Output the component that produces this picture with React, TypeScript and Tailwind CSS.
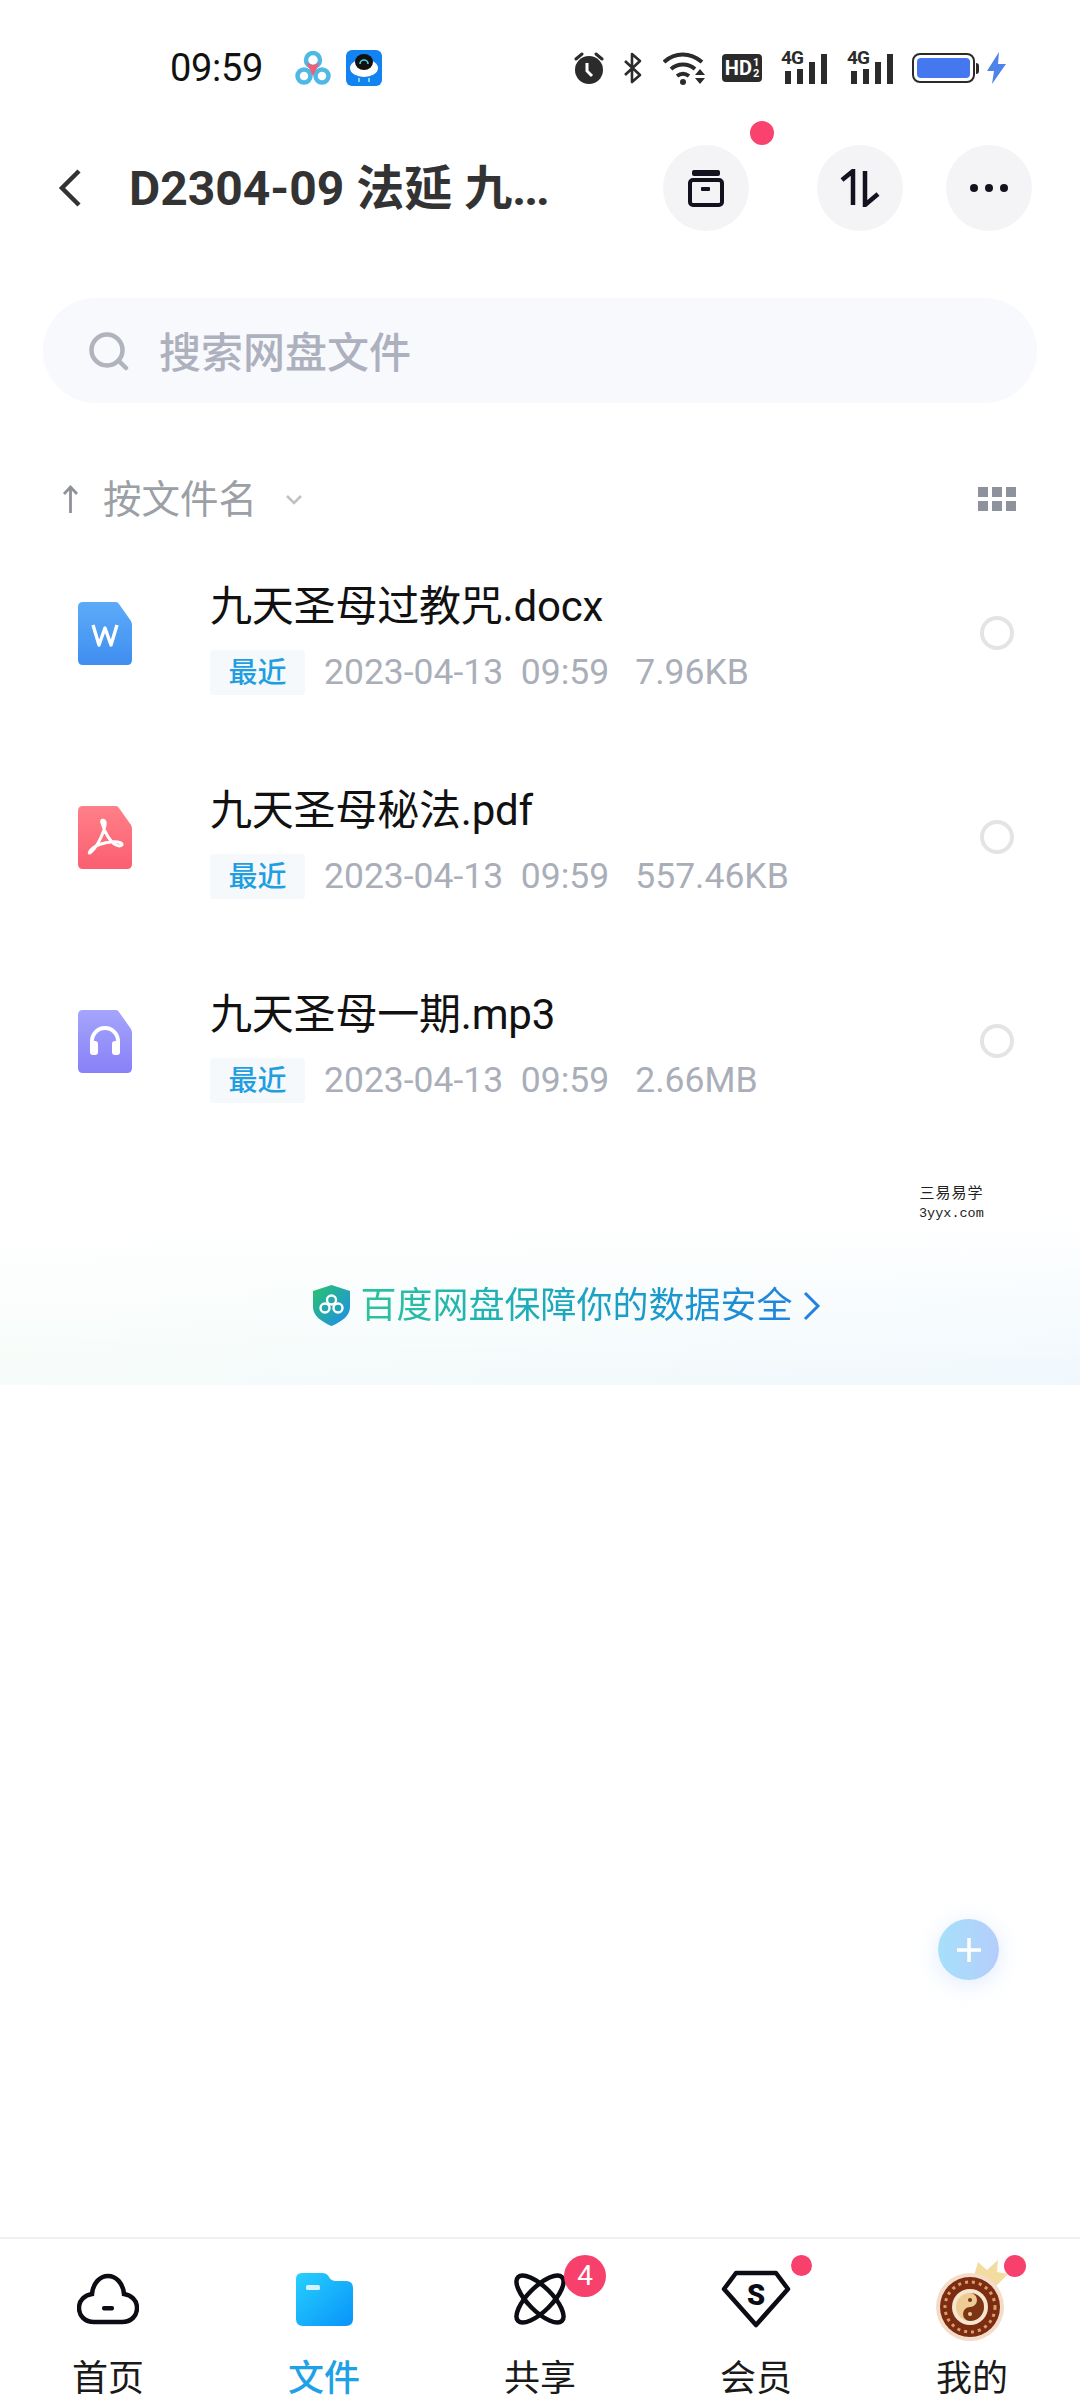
const CJK = "font-['Roboto','Noto_Sans_CJK_SC',sans-serif]";

const files = [
  { name: '九天圣母过教咒.docx', size: '7.96KB', kind: 'word' },
  { name: '九天圣母秘法.pdf', size: '557.46KB', kind: 'pdf' },
  { name: '九天圣母一期.mp3', size: '2.66MB', kind: 'audio' },
];

function Alarm() {
  return (
    <svg width="30" height="32" viewBox="0 0 30 32" className="mr-[19px]">
      <path d="M2 7 8 2M28 7l-6-5" stroke="#2b2b2b" strokeWidth="3" strokeLinecap="round" />
      <circle cx="15" cy="18" r="14" fill="#2b2b2b" />
      <path d="M13 11v8l5 5" stroke="#fff" strokeWidth="3" fill="none" />
    </svg>
  );
}

function Bluetooth() {
  return (
    <svg width="20" height="32" viewBox="0 0 20 32" className="mr-[20px]">
      <path d="M2 9 17 23 9 30V2l8 7L2 23" stroke="#2b2b2b" strokeWidth="2.6" fill="none" strokeLinejoin="round" />
    </svg>
  );
}

function Wifi() {
  return (
    <svg width="44" height="33" viewBox="0 0 44 33" className="mr-[15px]">
      <path d="M1 10C12 0 27 0 39 10" stroke="#2b2b2b" strokeWidth="4" fill="none" />
      <path d="M8 17c7-6 17-6 24 0" stroke="#2b2b2b" strokeWidth="4" fill="none" />
      <path d="M14 24c4-3 8-3 12 0" stroke="#2b2b2b" strokeWidth="4" fill="none" />
      <circle cx="20" cy="30" r="3" fill="#2b2b2b" />
      <path d="M37 17l5 6H32zM32 26h10l-5 6z" fill="#2b2b2b" />
    </svg>
  );
}

function Hd() {
  return (
    <div className="mr-[19px] flex h-[28px] w-[40px] items-center justify-center rounded-[4px] bg-[#2b2b2b] font-['Roboto',sans-serif] text-white">
      <span className="text-[20px] leading-none font-bold">HD</span>
      <span className="ml-[1px] flex flex-col text-[11px] leading-[11px] font-bold">
        <span>1</span>
        <span>2</span>
      </span>
    </div>
  );
}

function Signal() {
  return (
    <div className="relative h-[32px] w-[46px]">
      <span className="absolute top-[-4px] left-0 font-['Roboto',sans-serif] text-[19px] leading-[20px] font-bold tracking-[-0.8px] text-[#2b2b2b]">4G</span>
      <span className="absolute bottom-0 left-[4px] h-[13px] w-[6px] bg-[#2b2b2b]" />
      <span className="absolute bottom-0 left-[16px] h-[15px] w-[6px] bg-[#2b2b2b]" />
      <span className="absolute bottom-0 left-[28px] h-[22px] w-[6px] bg-[#2b2b2b]" />
      <span className="absolute bottom-0 left-[40px] h-[30px] w-[6px] bg-[#2b2b2b]" />
    </div>
  );
}

function Battery() {
  return (
    <div className="ml-[19px] flex items-center">
      <div className="flex h-[30px] w-[63px] items-center rounded-[8px] border-2 border-[#2b2b2b] p-[3px]">
        <div className="h-full w-full rounded-[4px] bg-[#4578ee]" />
      </div>
      <div className="ml-[1px] h-[11px] w-[3px] rounded-r-sm bg-[#2b2b2b]" />
    </div>
  );
}

function FileIcon({ kind }: { kind: string }) {
  const colors: Record<string, [string, string]> = {
    word: ['#5cabf9', '#3f8ef0'],
    pdf: ['#ff8088', '#fb5e70'],
    audio: ['#a5a5fb', '#8880f8'],
  };
  const [c1, c2] = colors[kind];
  return (
    <svg width="54" height="63" viewBox="0 0 54 63">
      <defs>
        <linearGradient id={`file-${kind}`} x1="0" y1="0" x2="0" y2="1">
          <stop offset="0" stopColor={c1} />
          <stop offset="1" stopColor={c2} />
        </linearGradient>
      </defs>
      <path d="M5 0H38Q40 0 41 2L53 19Q54 21 54 23V58Q54 63 49 63H5Q0 63 0 58V5Q0 0 5 0Z" fill={`url(#file-${kind})`} />
      {kind === 'word' && <path d="M15 23 21 43 27 26 33 43 39 23" stroke="#fff" strokeWidth="3.4" fill="none" strokeLinejoin="round" />}
      {kind === 'pdf' && <path d="M24 17C22 13 28 13 27 19 26 26 20 40 13 46 10 49 11 45 15 42 22 37 36 34 43 37 46 39 42 41 38 39 32 36 26 25 24 17Z" stroke="#fff" strokeWidth="3" fill="none" strokeLinejoin="round" />}
      {kind === 'audio' && (
        <g>
          <path d="M14 40V31a13 13 0 0 1 26 0v9" stroke="#fff" strokeWidth="4" fill="none" />
          <rect x="12" y="31" width="8" height="14" rx="3" fill="#fff" />
          <rect x="34" y="31" width="8" height="14" rx="3" fill="#fff" />
        </g>
      )}
    </svg>
  );
}

function FileRow({ name, size, kind }: { name: string; size: string; kind: string }) {
  return (
    <div className="flex h-[204px] items-center pr-[66px] pl-[78px]">
      <FileIcon kind={kind} />
      <div className="ml-[78px] flex flex-col pt-[10px]">
        <div className="text-[42px] leading-[50px] tracking-[-0.2px] text-[#111]">{name}</div>
        <div className="mt-[18px] flex items-center">
          <span className="flex h-[45px] w-[95px] items-center justify-center rounded-[3px] bg-[#f6f9fb] pt-[3px] text-[29px] font-medium text-[#1f9fe0]">最近</span>
          <span className="ml-[19px] text-[35.5px] leading-[45px] whitespace-pre text-[#a9aeb9]">2023-04-13  09:59</span>
          <span className="ml-[26px] text-[35.5px] leading-[45px] text-[#a9aeb9]">{size}</span>
        </div>
      </div>
      <div className="ml-auto h-[34px] w-[34px] rounded-full border-[4px] border-[#e3e4e6]" />
    </div>
  );
}

function NavItem({ label, active, children }: { label: string; active?: boolean; children: React.ReactNode }) {
  return (
    <div className="flex w-[216px] flex-col items-center">
      <div className="relative flex h-[72px] w-[80px] items-center justify-center">{children}</div>
      <div className={`mt-[24px] text-[36px] leading-[40px] ${active ? 'font-medium text-[#1ea1e6]' : 'text-[#1a1a1a]'}`}>{label}</div>
    </div>
  );
}

export default function App() {
  return (
    <div className={`relative flex h-[2400px] w-[1080px] flex-col overflow-hidden bg-white ${CJK}`}>
      {/* status bar */}
      <div className="flex h-[136px] items-center pr-[74px] pl-[170px]">
        <span className="w-[94px] text-[38px] tracking-[-0.3px] text-[#111]">09:59</span>
        <svg width="36" height="35" viewBox="0 0 36 35" className="ml-[31px]">
          <circle cx="9" cy="25" r="6.5" fill="none" stroke="#4fb9e6" strokeWidth="4.5" />
          <circle cx="27" cy="25" r="6.5" fill="none" stroke="#4fb9e6" strokeWidth="4.5" />
          <circle cx="18" cy="9" r="7" fill="none" stroke="#4fb9e6" strokeWidth="4.5" />
          <path d="M11 11 18 25 25 11Q18 17 11 11Z" fill="#ee5f78" />
        </svg>
        <svg width="36" height="36" viewBox="0 0 36 36" className="ml-[15px]">
          <rect width="36" height="36" rx="6" fill="#1283f0" />
          <ellipse cx="18" cy="18" rx="14" ry="9" fill="#fff" />
          <ellipse cx="18" cy="12" rx="9" ry="8" fill="#111" />
          <path d="M14 14a4 4 0 0 1 8 0" stroke="#4fd0d8" strokeWidth="1.6" fill="none" />
          <path d="M13 28v4M23 28v4" stroke="#7fd4f5" strokeWidth="2" />
        </svg>
        <div className="ml-auto flex items-center">
          <Alarm />
          <Bluetooth />
          <Wifi />
          <Hd />
          <Signal />
          <div className="ml-[20px]">
            <Signal />
          </div>
          <Battery />
          <svg width="19" height="32" viewBox="0 0 19 32" className="ml-[8px]">
            <path d="M12 0 0 19h7L5 32 19 12h-8z" fill="#4f82ea" />
          </svg>
        </div>
      </div>

      {/* header */}
      <div className="flex h-[104px] items-center pr-[48px] pl-[58px]">
        <svg width="24" height="38" viewBox="0 0 24 38">
          <path d="M21 2 4 19l17 17" stroke="#333" strokeWidth="4.5" fill="none" />
        </svg>
        <div className="ml-[47px] pt-[2px] text-[48px] font-bold whitespace-nowrap text-[#333]">
          D2304-09 法延 九<span className="tracking-[-2px]">...</span>
        </div>
        <div className="relative ml-auto flex h-[86px] w-[86px] items-center justify-center rounded-full bg-[#f4f4f6]">
          <svg width="38" height="38" viewBox="0 0 38 38">
            <rect x="5" y="1" width="28" height="6" rx="2" fill="#13131f" />
            <rect x="3" y="11" width="32" height="25" rx="3" stroke="#13131f" strokeWidth="4" fill="none" />
            <rect x="14" y="18" width="9" height="4" rx="1" fill="#13131f" />
          </svg>
          <span className="absolute top-[-24px] right-[-25px] h-[24px] w-[24px] rounded-full bg-[#f9426e]" />
        </div>
        <div className="ml-[68px] flex h-[86px] w-[86px] items-center justify-center rounded-full bg-[#f4f4f6]">
          <svg width="40" height="38" viewBox="0 0 40 38">
            <path d="M2 11 13 2V36" stroke="#13131f" strokeWidth="4.5" fill="none" />
            <path d="M25 2V36L38 25" stroke="#13131f" strokeWidth="4.5" fill="none" />
          </svg>
        </div>
        <div className="ml-[43px] flex h-[86px] w-[86px] items-center justify-center gap-[7px] rounded-full bg-[#f4f4f6]">
          <span className="h-[8px] w-[8px] rounded-full bg-[#13131f]" />
          <span className="h-[8px] w-[8px] rounded-full bg-[#13131f]" />
          <span className="h-[8px] w-[8px] rounded-full bg-[#13131f]" />
        </div>
      </div>

      {/* search */}
      <div className="mx-[43px] mt-[58px] flex h-[105px] items-center rounded-full bg-[#f8f9fd] pl-[45px]">
        <svg width="41" height="40" viewBox="0 0 41 40">
          <circle cx="19" cy="19" r="15.5" stroke="#b1b4bc" strokeWidth="4.5" fill="none" />
          <path d="M31 30l7 7" stroke="#b1b4bc" strokeWidth="4.5" strokeLinecap="round" />
        </svg>
        <span className="ml-[30px] pt-[6px] text-[42px] font-medium text-[#adb1bd]">搜索网盘文件</span>
      </div>

      {/* sort */}
      <div className="mt-[66px] flex h-[60px] items-center pr-[64px] pl-[62px]">
        <svg width="17" height="30" viewBox="0 0 17 30">
          <path d="M8.5 29V3M2 10l6.5-7 6.5 7" stroke="#8f9299" strokeWidth="2.8" fill="none" />
        </svg>
        <span className="ml-[24px] pt-[2px] text-[38.5px] text-[#9b9fa6]">按文件名</span>
        <svg width="18" height="11" viewBox="0 0 18 11" className="ml-[28px]">
          <path d="M2 2l7 7 7-7" stroke="#bfc1c5" strokeWidth="2.6" fill="none" />
        </svg>
        <div className="ml-auto grid grid-cols-3 gap-x-[4px] gap-y-[4px]">
          {[0, 1, 2, 3, 4, 5].map((i) => (
            <span key={i} className="h-[10px] w-[10px] bg-[#8e929c]" />
          ))}
        </div>
      </div>

      {/* files */}
      <div className="mt-[2px]">
        {files.map((f) => (
          <FileRow key={f.name} {...f} />
        ))}
      </div>

      {/* banner */}
      <div className="relative mt-[77px] flex h-[165px] items-center justify-center bg-[linear-gradient(to_bottom,#ffffff,rgba(255,255,255,0)),linear-gradient(to_right,#f6fcf9,#f0f8fd)] pt-[6px] pl-[54px]">
        <div className="absolute top-[-37px] left-[919px] flex flex-col items-center text-[#222]">
          <span className="font-['Noto_Sans_CJK_SC',serif] text-[15px] leading-[17px] tracking-[1px]">三易易学</span>
          <span className="mt-[7px] font-['Liberation_Mono',monospace] text-[13.5px] leading-[14px]">3yyx.com</span>
        </div>
        <svg width="37" height="41" viewBox="0 0 37 41">
          <defs>
            <linearGradient id="shield" x1="0" y1="0" x2="1" y2="1">
              <stop offset="0" stopColor="#28c46a" />
              <stop offset="1" stopColor="#1f8cf0" />
            </linearGradient>
          </defs>
          <path d="M18.5 0 37 6V22C37 31 28 37 18.5 41 9 37 0 31 0 22V6Z" fill="url(#shield)" />
          <circle cx="12" cy="23" r="4.5" stroke="#fff" strokeWidth="2.4" fill="none" />
          <circle cx="25" cy="23" r="4.5" stroke="#fff" strokeWidth="2.4" fill="none" />
          <circle cx="18.5" cy="15" r="4.5" stroke="#fff" strokeWidth="2.4" fill="none" />
        </svg>
        <span className="ml-[10px] bg-gradient-to-r from-[#2cc39a] to-[#2183de] bg-clip-text text-[36px] leading-[44px] text-transparent">百度网盘保障你的数据安全</span>
        <svg width="18" height="30" viewBox="0 0 18 30" className="ml-[10px]">
          <path d="M2 2l13 13L2 28" stroke="#2183de" strokeWidth="3" fill="none" />
        </svg>
      </div>

      <div className="flex-1" />

      {/* add button */}
      <div className="absolute top-[1919px] left-[938px] flex h-[61px] w-[61px] items-center justify-center rounded-full bg-gradient-to-r from-[#a6e0fa] to-[#b4cdfb] shadow-[0_4px_24px_rgba(150,190,250,0.3)]">
        <svg width="24" height="24" viewBox="0 0 24 24">
          <path d="M12 0v24M0 12h24" stroke="#fff" strokeWidth="3.5" />
        </svg>
      </div>

      {/* bottom nav */}
      <div className="flex h-[163px] border-t-2 border-[#f0f0f1] pt-[24px]">
        <NavItem label="首页">
          <svg width="62" height="52" viewBox="0 0 62 52">
            <path d="M17 49H45C54 49 60 43 60 35 60 27 54 22 47 21 46 10 39 3 31 3 23 3 16 10 15 21 8 22 2 27 2 35 2 43 8 49 17 49Z" stroke="#0c0c14" strokeWidth="4.5" fill="none" />
            <rect x="25" y="33" width="12" height="4.5" rx="2" fill="#0c0c14" />
          </svg>
        </NavItem>
        <NavItem label="文件" active>
          <svg width="57" height="53" viewBox="0 0 57 53">
            <defs>
              <linearGradient id="folder" x1="0" y1="0" x2="1" y2="1">
                <stop offset="0" stopColor="#27d0fd" />
                <stop offset="1" stopColor="#0893fa" />
              </linearGradient>
            </defs>
            <path d="M6 0H26Q31 0 33 4 35 8 40 8H50Q57 8 57 15V46Q57 53 50 53H7Q0 53 0 46V6Q0 0 6 0Z" fill="url(#folder)" />
            <rect x="10" y="12" width="14" height="5" rx="1.5" fill="#fff" opacity="0.8" />
          </svg>
        </NavItem>
        <NavItem label="共享">
          <svg width="54" height="54" viewBox="0 0 54 54">
            <ellipse cx="27" cy="27" rx="12" ry="31" transform="rotate(-45 27 27)" stroke="#0c0c14" strokeWidth="4.5" fill="none" />
            <ellipse cx="27" cy="27" rx="12" ry="31" transform="rotate(45 27 27)" stroke="#0c0c14" strokeWidth="4.5" fill="none" />
          </svg>
          <span className="absolute top-[-8px] right-[-26px] flex h-[42px] w-[42px] items-center justify-center rounded-full bg-[#f7406c] text-[28px] text-white">4</span>
        </NavItem>
        <NavItem label="会员">
          <svg width="70" height="58" viewBox="0 0 70 58">
            <path d="M15 3H55L67 19 35 55 3 19Z" stroke="#0c0c14" strokeWidth="4.5" strokeLinejoin="round" fill="none" />
            <text x="35" y="35" textAnchor="middle" fontFamily="Roboto, sans-serif" fontWeight="900" fontSize="29" fill="#0c0c14">S</text>
          </svg>
          <span className="absolute top-[-8px] right-[-16px] h-[21px] w-[21px] rounded-full bg-[#f7406c]" />
        </NavItem>
        <NavItem label="我的">
          <svg width="72" height="82" viewBox="0 0 72 82" className="mt-[4px]">
            <path d="M38 16 42 2 51 10 62 0 61 12 72 14 56 30Z" fill="#f2dca0" />
            <circle cx="34" cy="47" r="34" fill="#f4dcc8" />
            <circle cx="34" cy="47" r="30" fill="#7b2c12" />
            <circle cx="34" cy="47" r="25" fill="none" stroke="#d9a066" strokeWidth="3" strokeDasharray="3 4" />
            <circle cx="34" cy="47" r="18" fill="#f6e6cf" />
            <circle cx="34" cy="47" r="14" fill="#eccb94" />
            <path d="M34 33a14 14 0 0 1 0 28 7 7 0 0 1 0-14 7 7 0 0 0 0-14Z" fill="#7b3414" />
            <circle cx="34" cy="40" r="2" fill="#7b3414" />
            <circle cx="34" cy="54" r="2" fill="#eccb94" />
          </svg>
          <span className="absolute top-[-8px] right-[-14px] h-[22px] w-[22px] rounded-full bg-[#f7406c]" />
        </NavItem>
      </div>
    </div>
  );
}
